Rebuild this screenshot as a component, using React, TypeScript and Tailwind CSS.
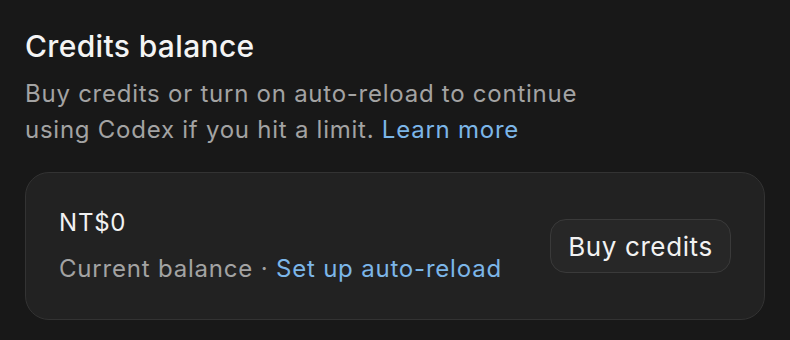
import React from "react";

export default function App() {
  return (
    <div
      className="w-[790px] h-[340px] bg-[#181818] px-[25px] pt-[28px] overflow-hidden"
      style={{ fontFamily: "Inter, 'Noto Sans', sans-serif" }}
    >
      <h1 className="text-[30px] leading-[36px] font-medium tracking-[0.35px] text-[#f4f4f4]">Credits balance</h1>
      <p className="mt-[12px] w-[640px] text-[24px] leading-[36px] tracking-[0.75px] text-[#a3a3a3]">
        Buy credits or turn on auto-reload to continue
        <br />
        using Codex if you hit a limit.{" "}
        <a className="text-[#7cb6e8]">Learn more</a>
      </p>
      <div className="mt-[24px] w-[740px] h-[148px] rounded-[24px] border border-[#333333] bg-[#222222] pl-[33px] pr-[33px] flex items-center justify-between">
        <div className="flex flex-col pt-[2px]">
          <div className="text-[24px] leading-[30px] tracking-[0.8px] text-[#f2f2f2]">NT$0</div>
          <div className="mt-[14px] text-[24px] leading-[34px] tracking-[0.8px] text-[#a3a3a3]">
            Current balance · <span className="text-[#7cb6e8]">Set up auto-reload</span>
          </div>
        </div>
        <button className="w-[181px] h-[54px] rounded-[16px] border border-[#3a3a3a] bg-[#272727] text-[26px] tracking-[0.6px] text-[#f2f2f2] flex items-center justify-center">
          Buy credits
        </button>
      </div>
    </div>
  );
}
